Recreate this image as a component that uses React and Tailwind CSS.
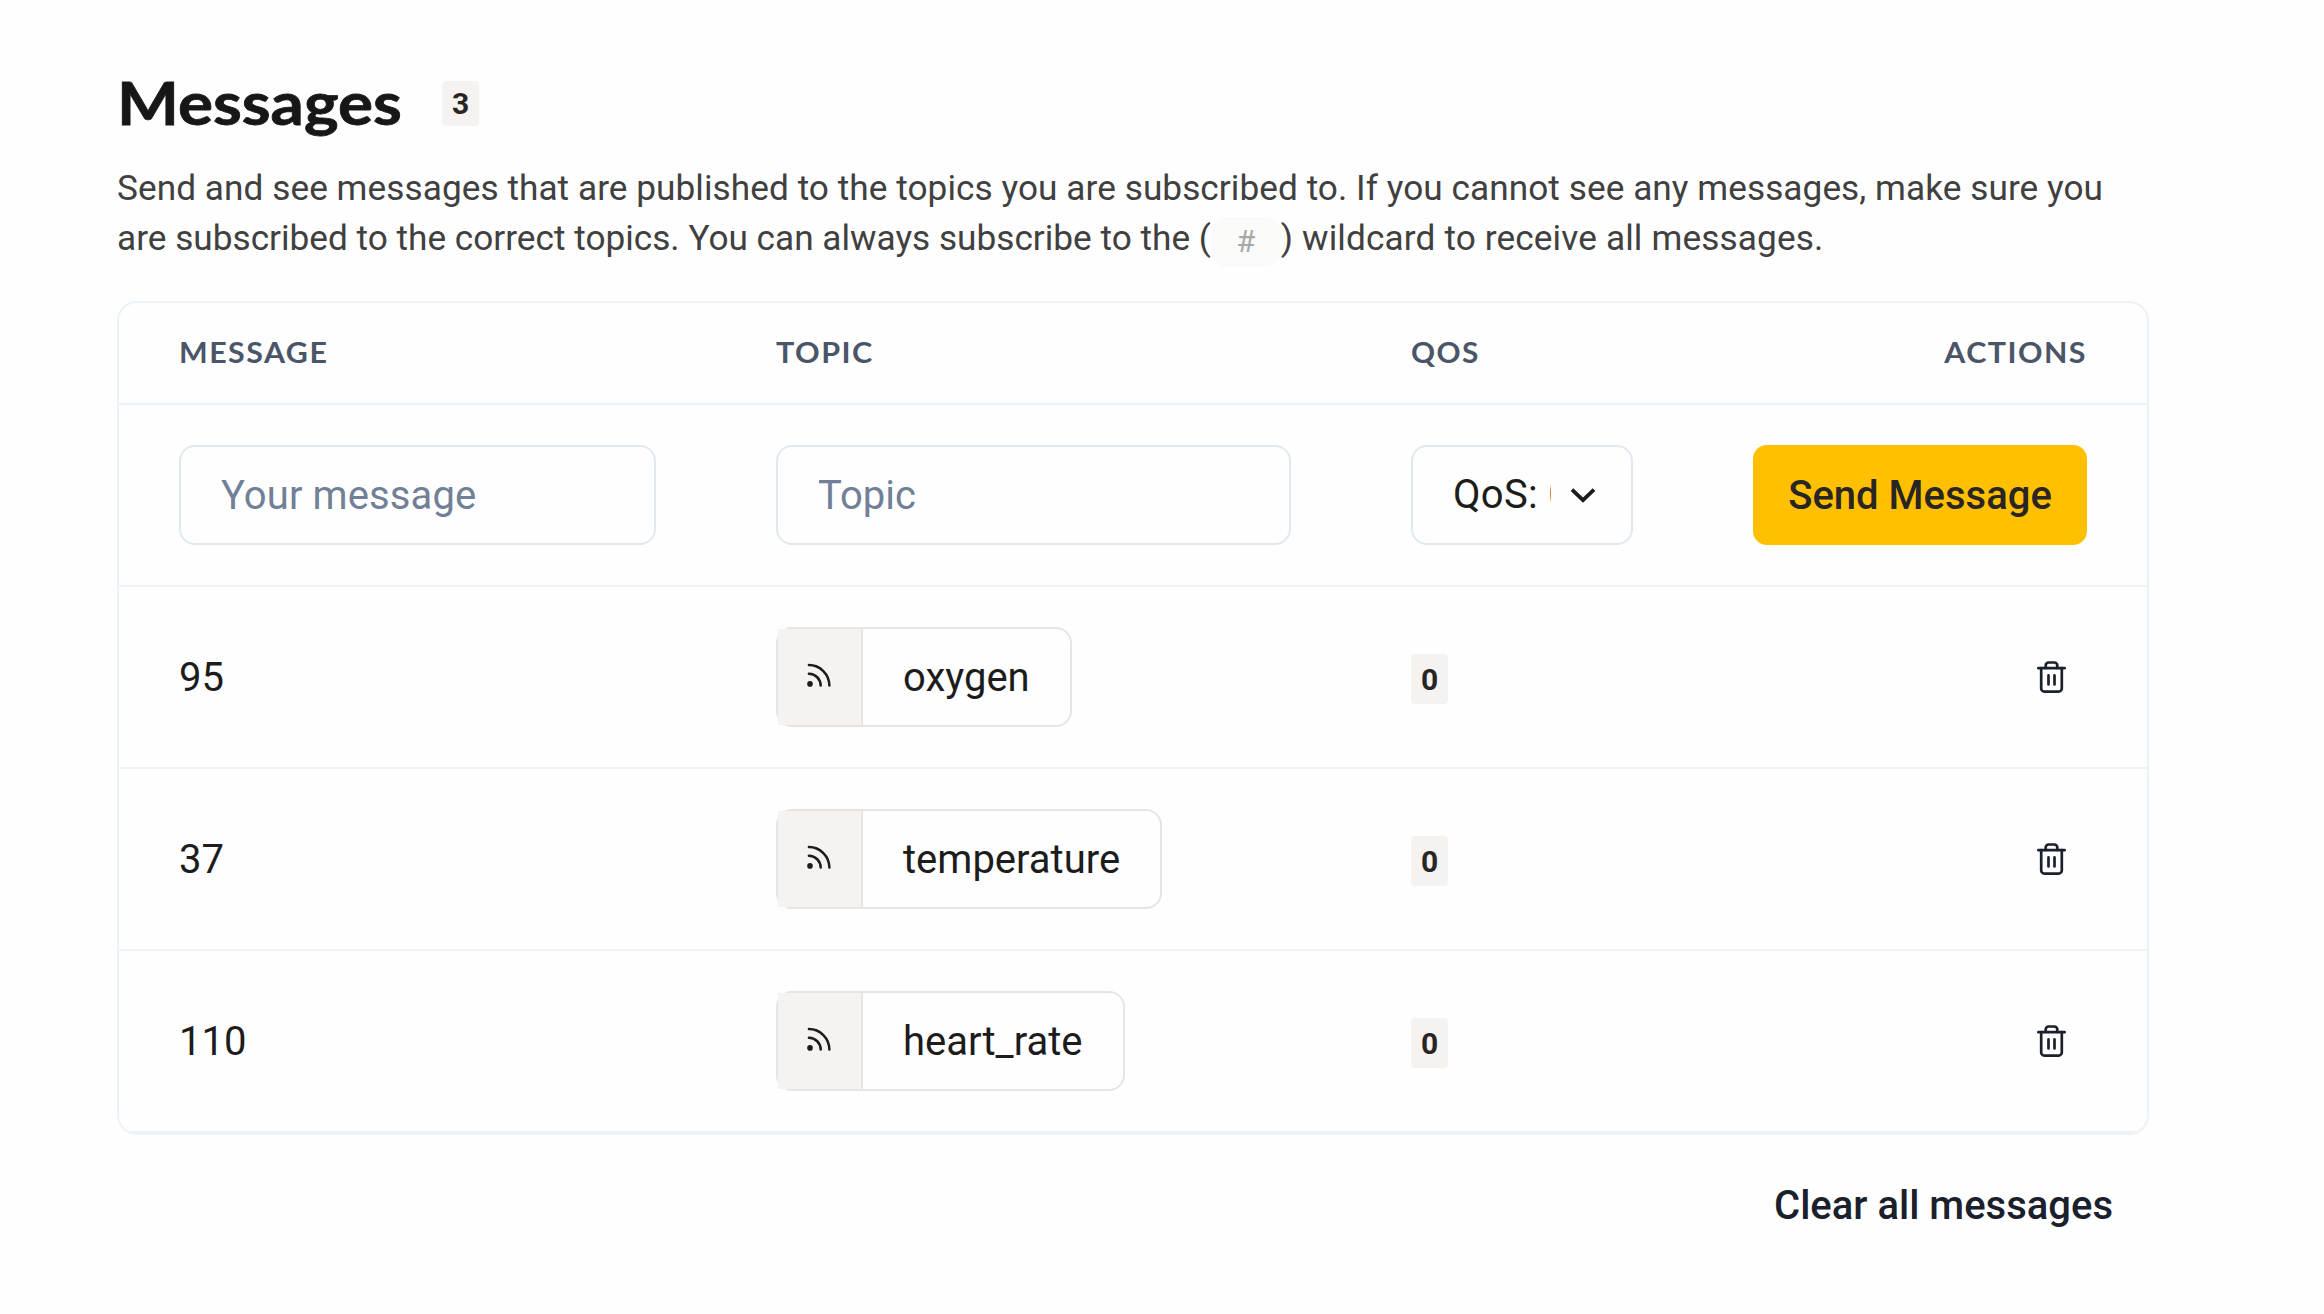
const messages = [
  { value: '95', topic: 'oxygen' },
  { value: '37', topic: 'temperature' },
  { value: '110', topic: 'heart_rate' },
];

const columns = 'grid grid-cols-[597px_635px_342px_454px] border-b-2 border-[#edf2f7]';

function SignalIcon() {
  return (
    <svg className="size-[27px] overflow-visible" viewBox="0 0 27 27" fill="none" stroke="#1c1c1c" strokeWidth="2.5" strokeLinecap="round">
      <path d="M2.9 1.1A20.5 20.7 0 0 1 23.4 21.6" />
      <path d="M2.9 9.8A11.8 11.8 0 0 1 14.7 21.6" />
      <circle cx="4" cy="19.9" r="2.8" fill="#1c1c1c" stroke="none" />
    </svg>
  );
}

function TrashIcon() {
  return (
    <svg className="h-8 w-[29px]" viewBox="0 0 29 32" fill="none" stroke="#1a202c" strokeWidth="2.7" strokeLinecap="round" strokeLinejoin="round">
      <path d="M1.4 7.2h26.2" />
      <path d="M4.2 7.2v20.2a3.2 3.2 0 0 0 3.2 3.2h14.2a3.2 3.2 0 0 0 3.2-3.2V7.2" />
      <path d="M8.7 7V4.4a2.9 2.9 0 0 1 2.9-2.9h5.8a2.9 2.9 0 0 1 2.9 2.9V7" />
      <path d="M11.5 14.4v9M17.5 14.4v9" />
    </svg>
  );
}

function Count({ children, className }) {
  return (
    <span className={`flex items-center justify-center rounded bg-[#f5f2f0] font-bold text-[#292524] ${className}`}>{children}</span>
  );
}

export default function App() {
  return (
    <main className="h-[1314px] w-[2324px] overflow-hidden bg-[#fefefe] pl-[117px] pt-[64px] font-['Roboto',sans-serif] text-[40px] text-[#1c1c1c]">
      <header className="flex h-[78px] items-center">
        <h1 className="w-[325px] origin-left scale-x-[1.093] pb-px font-['Lato',sans-serif] text-[60px] leading-[77px] font-bold text-[#171717] [-webkit-text-stroke:0.8px_#171717]">Messages</h1>
        <Count className="h-[45px] w-[37px] text-[30px]">3</Count>
      </header>
      <p className="mt-[21px] h-[138px] w-[2032px] text-[35.2px] leading-[50px] tracking-[0.055px] whitespace-nowrap text-[#404040]">
        Send and see messages that are published to the topics you are subscribed to. If you cannot see any messages, make sure you
        <br />
        <span className="tracking-[0.005px]">are subscribed to the correct topics. You can always subscribe to the (</span>
        <code className="relative top-px inline-flex h-[50px] w-[70px] items-center justify-center rounded-2xl bg-[#fafaf9] pt-px align-middle font-['Roboto',sans-serif] text-[31px] text-[#a8a8a8]">#</code>
        <span className="tracking-[0.13px]">) wildcard to receive all messages.</span>
      </p>
      <section className="w-[2032px] overflow-hidden rounded-[20px] border-2 border-[#edf2f7]">
        <div className={`${columns} h-[102px] items-center pb-px font-['Lato',sans-serif] text-[28.5px] font-bold tracking-[1.4px] text-[#4a5568]`}>
          <span className="ml-[60px] origin-left scale-x-[1.065]">MESSAGE</span>
          <span className="ml-[60px] origin-left scale-x-[1.07]">TOPIC</span>
          <span className="ml-[60px] origin-left scale-x-[1.045]">QOS</span>
          <span className="mr-[60px] origin-right scale-x-[1.065] text-right">ACTIONS</span>
        </div>
        <form className={`${columns} h-[182px] items-center`}>
          <div className="px-[60px]">
            <input className="h-[100px] w-full rounded-[16px] border-2 border-[#e2e8f0] px-10 tracking-[0.1px] placeholder:text-[#718096]" placeholder="Your message" />
          </div>
          <div className="px-[60px]">
            <input className="h-[100px] w-full rounded-[16px] border-2 border-[#e2e8f0] px-10 placeholder:text-[#718096]" placeholder="Topic" />
          </div>
          <div className="px-[60px]">
            <div className="flex h-[100px] w-full items-center rounded-[16px] border-2 border-[#e2e8f0] pl-10">
              <span className="w-[98px] overflow-hidden leading-[60px] tracking-[0.3px] whitespace-nowrap">QoS: 0</span>
              <svg className="ml-[18px] h-5 w-7" viewBox="0 0 28 20" fill="none" stroke="#1c1c1c" strokeWidth="3.8">
                <path d="M3 4.6l11 10.6L25 4.6" />
              </svg>
            </div>
          </div>
          <div className="px-[60px]">
            <button type="button" className="h-[100px] w-full rounded-[14px] bg-[#ffc000] pt-[2px] font-medium text-[#292524]">Send Message</button>
          </div>
        </form>
        {messages.map((message) => (
          <div key={message.topic} className={`${columns} h-[182px] items-center`}>
            <span className="pt-[2px] pl-[60px]">{message.value}</span>
            <div className="pl-[60px]">
              <div className="flex h-[100px] w-fit rounded-[16px] border-2 border-[#e5e5e5]">
                <div className="flex w-[85px] items-center justify-center border-r-2 border-[#e5e5e5] bg-[#f5f2f0]">
                  <SignalIcon />
                </div>
                <span className="flex items-center px-10 pt-[2px]">{message.topic}</span>
              </div>
            </div>
            <div className="pl-[60px] pt-[3px]">
              <Count className="h-[50px] w-[37px] pt-px text-[30px]">0</Count>
            </div>
            <div className="flex justify-end pr-[81px]">
              <TrashIcon />
            </div>
          </div>
        ))}
      </section>
      <footer className="mt-[41px] w-[1996px] text-right leading-[60px] font-medium text-[#1a202c]">Clear all messages</footer>
    </main>
  );
}
